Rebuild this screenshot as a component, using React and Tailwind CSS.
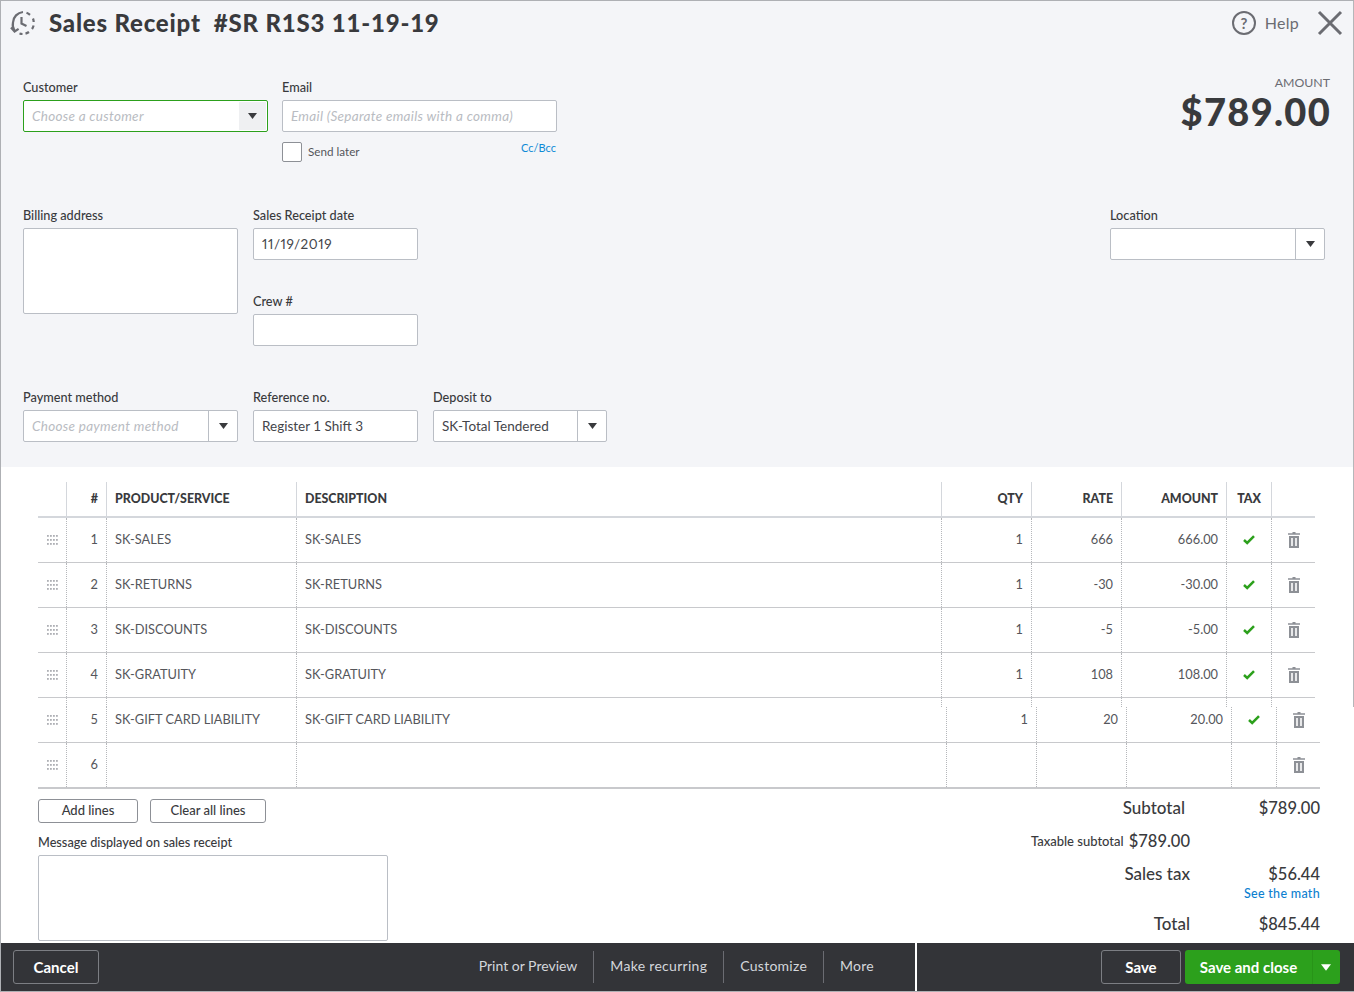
import React from "react";

const font = { fontFamily: '"Lato", "Open Sans", sans-serif' };
const COLS = "grid grid-cols-[29px_40px_190px_645px_90px_90px_105px_45px_43px] w-[1277px]";
const SHIFT = "grid grid-cols-[29px_40px_190px_650px_90px_90px_105px_45px_43px] w-[1282px]";

function Caret({ color = "#393a3d", w = 9, h = 6 }) {
  return (
    <svg width={w} height={h} viewBox="0 0 9 6">
      <path d="M0 0h9L4.5 6z" fill={color} />
    </svg>
  );
}

function Label({ children, className = "" }) {
  return <div className={`text-[12.7px] leading-[16px] text-[#393a3d] font-medium h-[16px] ${className}`}>{children}</div>;
}

function Input({ width, children, placeholder, dropdown, green }) {
  return (
    <div
      className={`${width} h-[32px] bg-white rounded-[2px] border flex items-stretch text-[13.5px] ${
        green ? "border-[#2ca01c]" : "border-[#babec5]"
      }`}
    >
      <div
        className={`flex-1 pl-[8px] flex items-center truncate ${
          placeholder ? "italic text-[#b9bcc2] tracking-[0.3px]" : "text-[#44454a]"
        }`}
      >
        {placeholder || children}
      </div>
      {dropdown && (
        <div
          className={`flex items-center justify-center ${
            green ? "w-[27px] bg-[#eff0f2] my-px mr-px" : "w-[29px] border-l border-[#babec5]"
          }`}
        >
          <Caret />
        </div>
      )}
    </div>
  );
}

function Trash() {
  return (
    <svg width="12" height="16" viewBox="0 0 12 16">
      <path d="M4.5 0h3v1.2H12v1.6H0V1.2h4.5z" fill="#8d9096" />
      <path fillRule="evenodd" d="M1 4h10v12H1zM3.2 6v8h1.6V6zM7.2 6v8h1.6V6z" fill="#8d9096" />
    </svg>
  );
}

function Check() {
  return (
    <svg width="12" height="10" viewBox="0 0 12 10">
      <path d="M1 5l3.2 3L11 1.2" fill="none" stroke="#2ca01c" strokeWidth="2.5" />
    </svg>
  );
}

function Drag() {
  return (
    <svg width="11" height="10" viewBox="0 0 11 10" fill="#aeb0b5">
      {[0, 4, 8].map((y) =>
        [0, 3, 6, 9].map((x) => <rect key={`${x}-${y}`} x={x} y={y} width="1.8" height="1.8" />)
      )}
    </svg>
  );
}

const dotted = "border-r border-dotted border-[#b5b7bb]";

function Cells({ n, product, desc, qty, rate, amount, tax, textPad = "pb-[1px]", iconPad = "pb-0" }) {
  return (
    <>
      <div className={`${dotted} flex items-center justify-center ${iconPad}`}><Drag /></div>
      <div className={`${dotted} flex items-center justify-end pr-[8px] ${textPad}`}>{n}</div>
      <div className={`${dotted} flex items-center pl-[8px] whitespace-nowrap ${textPad}`}>{product}</div>
      <div className={`${dotted} flex items-center pl-[8px] ${textPad}`}>{desc}</div>
      <div className={`${dotted} flex items-center justify-end pr-[8px] ${textPad}`}>{qty}</div>
      <div className={`${dotted} flex items-center justify-end pr-[8px] ${textPad}`}>{rate}</div>
      <div className={`${dotted} flex items-center justify-end pr-[8px] ${textPad}`}>{amount}</div>
      <div className={`${dotted} flex items-center justify-center ${iconPad}`}>{tax && <Check />}</div>
      <div className={`flex items-center justify-center ${iconPad}`}><Trash /></div>
    </>
  );
}

function BlankCols() {
  return (
    <div className={`${COLS} h-[9px] shrink-0`}>
      {[0, 1, 2, 3, 4, 5, 6, 7].map((i) => <div key={i} className={dotted} />)}
    </div>
  );
}

const rows = [
  { n: 1, product: "SK-SALES", desc: "SK-SALES", qty: "1", rate: "666", amount: "666.00", tax: true },
  { n: 2, product: "SK-RETURNS", desc: "SK-RETURNS", qty: "1", rate: "-30", amount: "-30.00", tax: true },
  { n: 3, product: "SK-DISCOUNTS", desc: "SK-DISCOUNTS", qty: "1", rate: "-5", amount: "-5.00", tax: true },
  { n: 4, product: "SK-GRATUITY", desc: "SK-GRATUITY", qty: "1", rate: "108", amount: "108.00", tax: true },
];

const headCell = "border-r border-[#d4d7dc] flex items-center";

function Logo() {
  return (
    <svg width="26" height="26" viewBox="0 0 26 26" fill="none" stroke="#6b6c72" strokeWidth="2.2">
      <path d="M4.4 20.5A11 11 0 0 1 3 12.5 11 11 0 0 1 13 2" />
      <path d="M1 17.5l3.6 4 4-2.6" />
      <path d="M11.5 7v6.5l5 2.5" />
      <path d="M16.5 2.8a11 11 0 0 1 3.5 2" />
      <path d="M23 8.5a11 11 0 0 1 .7 3.5" />
      <path d="M23.6 15.5a11 11 0 0 1-1.6 3.5" />
      <path d="M19 22a11 11 0 0 1-3.5 1.6" />
      <path d="M12.5 24a11 11 0 0 1-3-.5" />
    </svg>
  );
}

export default function App() {
  return (
    <div style={font} className="relative w-[1354px] h-[992px] overflow-hidden bg-white border-l border-t border-b border-[#aeb0b4] flex flex-col">
      <div className="absolute right-0 -top-px w-px h-[707px] bg-[#b5b7ba]" />

      <div className="bg-[#f4f5f8] h-[466px] shrink-0 flex flex-col">
        {/* title */}
        <div className="h-[44px] flex items-center pl-[9px] pr-[11px] shrink-0">
          <Logo />
          <div className="ml-[13px] text-[24px] font-black text-[#393a3d] tracking-[0.8px] whitespace-pre">Sales Receipt  #SR R1S3 11-19-19</div>
          <div className="ml-auto flex items-center">
            <div className="w-[24px] h-[24px] rounded-full border-2 border-[#6b6c72] text-[#6b6c72] text-[15px] font-bold flex items-center justify-center">?</div>
            <div className="ml-[9px] text-[16px] text-[#6b6c72] tracking-[0.25px]">Help</div>
            <svg className="ml-[18px]" width="26" height="26" viewBox="0 0 26 26" stroke="#6b6c72" strokeWidth="3" fill="none">
              <path d="M2 2l22 22M24 2L2 24" />
            </svg>
          </div>
        </div>

        {/* customer row */}
        <div className="flex pl-[22px] pr-[23px] h-[162px] shrink-0">
          <div className="w-[245px] mt-[34px]">
            <Label className="mb-[5px]">Customer</Label>
            <Input width="w-[245px]" placeholder="Choose a customer" dropdown green />
          </div>
          <div className="w-[275px] ml-[14px] mt-[34px]">
            <Label className="mb-[5px]">Email</Label>
            <Input width="w-[275px]" placeholder="Email (Separate emails with a comma)" />
            <div className="flex items-start mt-[10px]">
              <div className="w-[20px] h-[20px] bg-white border border-[#8d9096] rounded-[2px]" />
              <div className="ml-[6px] mt-[1px] text-[11.7px] leading-[16px] text-[#55565b]">Send later</div>
              <div className="ml-auto pr-px text-[11px] leading-[12px] text-[#0d8ad6]">Cc/Bcc</div>
            </div>
          </div>
          <div className="ml-auto text-right pt-[30px]">
            <div className="text-[12.3px] leading-[16px] text-[#6b6c72] pr-px">AMOUNT</div>
            <div className="text-[38px] leading-[40px] font-black text-[#393a3d] tracking-[1.3px]">$789.00</div>
          </div>
        </div>

        {/* address row */}
        <div className="flex pl-[22px] pr-[29px] shrink-0">
          <div className="w-[215px]">
            <Label className="mb-[5px]">Billing address</Label>
            <div className="h-[86px] bg-white border border-[#babec5] rounded-[2px]" />
          </div>
          <div className="w-[165px] ml-[15px]">
            <Label className="mb-[5px]">Sales Receipt date</Label>
            <Input width="w-[165px]"><span className="proportional-nums tracking-[0.6px]">11/19/2019</span></Input>
            <Label className="mt-[33px] mb-[5px]">Crew #</Label>
            <Input width="w-[165px]" />
          </div>
          <div className="w-[215px] ml-auto">
            <Label className="mb-[5px]">Location</Label>
            <Input width="w-[215px]" dropdown />
          </div>
        </div>

        {/* payment row */}
        <div className="flex pl-[22px] mt-[43px] shrink-0">
          <div className="w-[215px]">
            <Label className="mb-[5px]">Payment method</Label>
            <Input width="w-[215px]" placeholder="Choose payment method" dropdown />
          </div>
          <div className="w-[165px] ml-[15px]">
            <Label className="mb-[5px]">Reference no.</Label>
            <Input width="w-[165px]">Register 1 Shift 3</Input>
          </div>
          <div className="w-[174px] ml-[15px]">
            <Label className="mb-[5px]">Deposit to</Label>
            <Input width="w-[174px]" dropdown>SK-Total Tendered</Input>
          </div>
        </div>
      </div>

      {/* table */}
      <div className="pl-[37px] pt-[15px] text-[12.8px] text-[#55565b] shrink-0">
        <div className={`${COLS} h-[36px] border-b-2 border-[#d4d7dc] text-[12.4px] font-black text-[#393a3d]`}>
          <div className={headCell} />
          <div className={`${headCell} justify-end pr-[8px]`}>#</div>
          <div className={`${headCell} pl-[8px]`}>PRODUCT/SERVICE</div>
          <div className={`${headCell} pl-[8px]`}>DESCRIPTION</div>
          <div className={`${headCell} justify-end pr-[8px]`}>QTY</div>
          <div className={`${headCell} justify-end pr-[8px]`}>RATE</div>
          <div className={`${headCell} justify-end pr-[8px]`}>AMOUNT</div>
          <div className={`${headCell} justify-center`}>TAX</div>
          <div />
        </div>
        {rows.map((r) => (
          <div key={r.n} className={`${COLS} h-[45px] border-b border-[#c8c9cc]`}>
            <Cells {...r} />
          </div>
        ))}
        <div className="h-[45px] w-[1282px] border-b border-[#c8c9cc] flex flex-col">
          <BlankCols />
          <div className={`${SHIFT} flex-1`}>
            <Cells
              n={5}
              product="SK-GIFT CARD LIABILITY"
              desc="SK-GIFT CARD LIABILITY"
              qty="1"
              rate="20"
              amount="20.00"
              tax
              textPad="pb-[9px]"
              iconPad="pb-[9px]"
            />
          </div>
        </div>
        <div className={`${SHIFT} h-[46px] border-b-2 border-[#c8c9cc]`}>
          <Cells n={6} />
        </div>
      </div>

      {/* lower */}
      <div className="flex pl-[37px] pr-[34px] flex-1 min-h-0 overflow-hidden">
        <div className="w-[350px] pt-[10px]">
          <div className="flex gap-[12px]">
            <div className="w-[100px] h-[24px] rounded-[3px] border border-[#8d9096] flex items-center justify-center text-[13px] font-medium text-[#393a3d]">Add lines</div>
            <div className="w-[116px] h-[24px] rounded-[3px] border border-[#8d9096] flex items-center justify-center text-[13px] font-medium text-[#393a3d]">Clear all lines</div>
          </div>
          <Label className="mt-[11px] mb-[5px]">Message displayed on sales receipt</Label>
          <div className="h-[86px] bg-white border border-[#babec5] rounded-[2px]" />
        </div>
        <div className="ml-auto w-[300px] text-[#393a3d] text-[17px] font-medium">
          <div className="flex h-[20px] mt-[9px] items-center">
            <div className="w-[165px] text-right">Subtotal</div>
            <div className="flex-1 text-right text-[16.5px]">$789.00</div>
          </div>
          <div className="flex h-[20px] mt-[13px] items-center justify-start w-[170px]">
            <div className="ml-auto text-[13px] mr-[5px] pt-[2px] whitespace-nowrap">Taxable subtotal</div>
            <div className="text-[16.5px]">$789.00</div>
          </div>
          <div className="flex h-[20px] mt-[13px] items-center">
            <div className="w-[170px] text-right">Sales tax</div>
            <div className="flex-1 text-right text-[16.5px]">$56.44</div>
          </div>
          <div className="text-right text-[12.5px] leading-[16px] text-[#0d7fd0] tracking-[0.3px] mt-[2px]">See the math</div>
          <div className="flex h-[20px] mt-[12px] items-center">
            <div className="w-[170px] text-right">Total</div>
            <div className="flex-1 text-right text-[16.5px]">$845.44</div>
          </div>
        </div>
      </div>

      {/* footer */}
      <div className="h-[48px] shrink-0 flex bg-[#333438] text-white">
        <div className="w-[916px] shrink-0 flex items-center pl-[12px] pr-[41px] border-r-2 border-white">
          <div className="w-[86px] h-[34px] rounded-[3px] border border-[#7c7e83] flex items-center justify-center text-[15px] font-bold">Cancel</div>
          <div className="ml-auto flex items-center text-[14px] text-[#d4d7dc]">
            <div className="pr-[16px] pb-[3px] h-[32px] flex items-center border-r border-[#6b6c72]">Print or Preview</div>
            <div className="px-[16px] pb-[3px] h-[32px] flex items-center border-r border-[#6b6c72] tracking-[0.3px]">Make recurring</div>
            <div className="px-[16px] pb-[3px] h-[32px] flex items-center border-r border-[#6b6c72] tracking-[0.25px]">Customize</div>
            <div className="pl-[16px] pb-[3px] h-[32px] flex items-center tracking-[0.25px]">More</div>
          </div>
        </div>
        <div className="flex-1 flex items-center justify-end pr-[14px]">
          <div className="w-[80px] h-[34px] rounded-[3px] border border-[#7c7e83] flex items-center justify-center text-[15px] font-bold">Save</div>
          <div className="ml-[4px] w-[155px] h-[34px] rounded-[3px] bg-[#2ca01c] flex items-stretch text-[15px] font-bold">
            <div className="flex-1 flex items-center justify-center border-r border-[#289418]">Save and close</div>
            <div className="w-[27px] pr-[2px] flex items-center justify-center"><Caret color="#ffffff" w={10} h={7} /></div>
          </div>
        </div>
      </div>
    </div>
  );
}
